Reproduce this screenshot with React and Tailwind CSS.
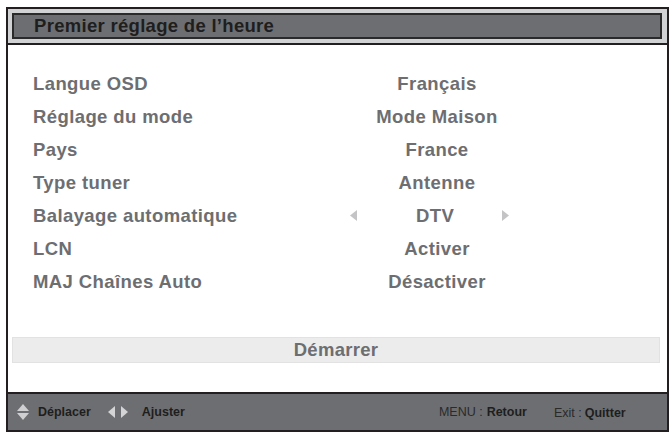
import React from 'react';

const rows = [
  { label: 'Langue OSD', value: 'Français' },
  { label: 'Réglage du mode', value: 'Mode Maison' },
  { label: 'Pays', value: 'France' },
  { label: 'Type tuner', value: 'Antenne' },
  { label: 'Balayage automatique', value: 'DTV', arrows: true },
  { label: 'LCN', value: 'Activer' },
  { label: 'MAJ Chaînes Auto', value: 'Désactiver' },
];

const font = { fontFamily: '"Liberation Sans", Arial, sans-serif' };

const UpDownIcon = () => (
  <svg width="12" height="16" viewBox="0 0 12 16">
    <polygon points="6,0 12,7 0,7" fill="#cfcfd1" />
    <polygon points="0,9 12,9 6,16" fill="#cfcfd1" />
  </svg>
);

const LeftRightIcon = () => (
  <svg width="20" height="12" viewBox="0 0 20 12">
    <polygon points="7,0 7,12 0,6" fill="#d4d4d6" />
    <polygon points="13,0 13,12 20,6" fill="#d4d4d6" />
  </svg>
);

const App = () => {
  return (
    <div className="w-[671px] h-[435px] bg-white pt-[7px] px-[2px]" style={font}>
      <div className="ml-[4px] w-[663px] h-[425px] border-2 border-[#231f20] flex flex-col">
        {/* title */}
        <div className="bg-[#d1d2d4] pt-[4px] pb-[4px] pl-[4px] pr-[5px] border-b-2 border-[#231f20]">
          <div className="h-[26px] border-2 border-[#2a2a2a] bg-[#6d6e71] flex items-center pl-[20px]">
            <span className="text-[18.5px] font-bold text-[#1e1e1e] tracking-[0.3px] leading-none">
              Premier réglage de l’heure
            </span>
          </div>
        </div>

        {/* settings */}
        <div className="flex-1 flex flex-col pt-[22px]">
          {rows.map((row) => (
            <div key={row.label} className="grid grid-cols-[304px_200px] pl-[25px] h-[33px] items-center text-[18.5px] font-bold text-[#6d6e71] tracking-[0.4px]">
              <span>{row.label}</span>
              {row.arrows ? (
                <div className="flex items-center pl-[13px]">
                  <svg width="7" height="11" viewBox="0 0 7 11">
                    <polygon points="7,0 7,11 0,5.5" fill="#c4c4c6" />
                  </svg>
                  <span className="ml-[59px]">{row.value}</span>
                  <svg width="7" height="11" viewBox="0 0 7 11" className="ml-[48px]">
                    <polygon points="0,0 0,11 7,5.5" fill="#c4c4c6" />
                  </svg>
                </div>
              ) : (
                <span className="text-center">{row.value}</span>
              )}
            </div>
          ))}

          <div className="mt-[39px] ml-[4px] mr-[7px] h-[26px] bg-[#ececec] border border-[#e2e2e2] flex items-center justify-center text-[18.5px] font-bold text-[#6d6e71] tracking-[0.3px]">
            Démarrer
          </div>
        </div>

        {/* footer */}
        <div className="h-[38px] border-t-2 border-[#231f20] bg-[#6d6e71] flex items-center pl-[9px] text-[12.5px] text-[#1e1e1e]">
          <UpDownIcon />
          <span className="ml-[9px] font-bold">Déplacer</span>
          <span className="ml-[17px] flex"><LeftRightIcon /></span>
          <span className="ml-[14px] font-bold">Ajuster</span>
          <span className="ml-[254px] text-[#2a2a2a]">MENU :</span>
          <span className="ml-[4px] font-bold">Retour</span>
          <span className="ml-[27px] text-[#2a2a2a] mt-[2px]">Exit :</span>
          <span className="ml-[3px] font-bold mt-[2px]">Quitter</span>
        </div>
      </div>
    </div>
  );
};

export default App;
